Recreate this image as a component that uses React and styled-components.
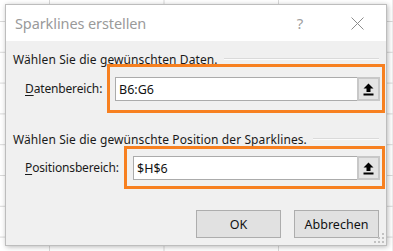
import React from 'react';
import styled, { createGlobalStyle } from 'styled-components';

const GlobalStyle = createGlobalStyle`
    html, body {
        margin: 0;
        padding: 0;
        background: #fff;
    }
    * {
        box-sizing: border-box;
    }
`

const Sheet = styled.div`
    width: 393px;
    height: 251px;
    padding: 4px 0 0 5px;
    overflow: hidden;
    background-color: #fff;
    background-image:
        linear-gradient(to right, #d9d9d9 1px, transparent 1px),
        linear-gradient(to bottom, #d9d9d9 1px, transparent 1px);
    background-size: 114.5px 30.8px;
    background-position: 49px 21px;
    font-family: "Noto Sans", "Open Sans", sans-serif;
`

const Dialog = styled.div`
    position: relative;
    width: 382px;
    height: 242px;
    display: flex;
    flex-direction: column;
    background: #f0f0f0;
    border: 1px solid #bdbdbd;
    box-shadow: 1px 1px 5px rgba(0, 0, 0, 0.28);
`

const TitleBar = styled.div`
    height: 36px;
    flex: none;
    display: flex;
    align-items: center;
    padding-left: 9px;
    background: #fff;
`

const Title = styled.div`
    flex: 1;
    font-size: 14.5px;
    color: #9a9a9a;
    letter-spacing: -0.1px;
`

const HelpButton = styled.div`
    width: 34px;
    text-align: center;
    font-size: 15px;
    color: #a0a0a0;
`

const CloseButton = styled.div`
    width: 34px;
    margin: 0 12px 0 23px;
    display: flex;
    justify-content: center;
`

const Body = styled.div`
    flex: 1;
    display: flex;
    flex-direction: column;
    padding: 10px 1px 0 7px;
    font-size: 12px;
    color: #1a1a1a;
`

const SectionHead = styled.div`
    display: flex;
    align-items: center;
    height: 16px;
    margin-top: ${(p) => p.$top || 0}px;
    padding-right: 6px;
    white-space: nowrap;
    letter-spacing: 0.1px;
`

const Rule = styled.div`
    flex: 1;
    margin-left: 6px;
    height: 2px;
    border-top: 1px solid #dadada;
    border-bottom: 1px solid #fbfbfb;
`

const FieldRow = styled.div`
    display: flex;
    align-items: center;
    margin-top: ${(p) => p.$top}px;
    padding-left: 12px;
`

const Label = styled.div`
    width: ${(p) => p.$width}px;
    flex: none;
    letter-spacing: -0.15px;

    & u {
        text-decoration-thickness: 1px;
        text-underline-offset: 2px;
    }
`

const Highlight = styled.div`
    flex: 1;
    border: 3px solid #f78020;
    padding: ${(p) => p.$pad};
`

const Field = styled.div`
    display: flex;
    align-items: stretch;
    height: 24px;
    background: #fff;
    border: 1px solid #ababab;
`

const FieldValue = styled.div`
    flex: 1;
    display: flex;
    align-items: center;
    padding-left: 3px;
    font-size: 12.5px;
    color: #111;
`

const PickButton = styled.div`
    width: 23px;
    margin: -1px -1px -1px 0;
    display: flex;
    align-items: center;
    justify-content: center;
    background: #e4e4e4;
    border: 2px solid #c8c8c8;
`

const ButtonBar = styled.div`
    display: flex;
    justify-content: flex-end;
    gap: 13px;
    margin-top: 21px;
    padding-right: 6px;
`

const Button = styled.div`
    width: 85px;
    height: 28px;
    display: flex;
    align-items: center;
    justify-content: center;
    background: #e1e1e1;
    border: 1px solid #adadad;
    font-size: 12.5px;
    color: #111;
`

const Grip = styled.svg`
    position: absolute;
    right: 1px;
    bottom: 1px;
`

const UploadIcon = () => (
    <svg width="11" height="13" viewBox="0 0 11 13">
        <path d="M5.5 0.5 L10.5 5.5 H7.5 V9 H3.5 V5.5 H0.5 Z" fill="#000" />
        <rect x="0.5" y="10.5" width="10" height="2" fill="#000" />
    </svg>
);

const App = () => {
    return (
        <Sheet>
            <GlobalStyle />
            <Dialog>
                <TitleBar>
                    <Title>Sparklines erstellen</Title>
                    <HelpButton>?</HelpButton>
                    <CloseButton>
                        <svg width="13" height="13" viewBox="0 0 13 13">
                            <path d="M0.5 0.5 L12.5 12.5 M12.5 0.5 L0.5 12.5" stroke="#8c8c8c" strokeWidth="1" />
                        </svg>
                    </CloseButton>
                </TitleBar>
                <Body>
                    <SectionHead>
                        Wählen Sie die gewünschten Daten.
                        <Rule />
                    </SectionHead>
                    <FieldRow $top={-3}>
                        <Label $width={82}><u>D</u>atenbereich:</Label>
                        <Highlight $pad="10px 2px 9px 5px">
                            <Field>
                                <FieldValue>B6:G6</FieldValue>
                                <PickButton><UploadIcon /></PickButton>
                            </Field>
                        </Highlight>
                    </FieldRow>
                    <SectionHead $top={18}>
                        Wählen Sie die gewünschte Position der Sparklines.
                        <Rule />
                    </SectionHead>
                    <FieldRow $top={-1}>
                        <Label $width={99}><u>P</u>ositionsbereich:</Label>
                        <Highlight $pad="7px 2px 6px 6px">
                            <Field>
                                <FieldValue>$H$6</FieldValue>
                                <PickButton><UploadIcon /></PickButton>
                            </Field>
                        </Highlight>
                    </FieldRow>
                    <ButtonBar>
                        <Button>OK</Button>
                        <Button>Abbrechen</Button>
                    </ButtonBar>
                </Body>
                <Grip width="11" height="11" viewBox="0 0 11 11">
                    <rect x="8" y="0" width="2" height="2" fill="#c2c2c2" />
                    <rect x="4" y="4" width="2" height="2" fill="#c2c2c2" />
                    <rect x="8" y="4" width="2" height="2" fill="#c2c2c2" />
                    <rect x="0" y="8" width="2" height="2" fill="#c2c2c2" />
                    <rect x="4" y="8" width="2" height="2" fill="#c2c2c2" />
                    <rect x="8" y="8" width="2" height="2" fill="#c2c2c2" />
                </Grip>
            </Dialog>
        </Sheet>
    );
};

export default App;
